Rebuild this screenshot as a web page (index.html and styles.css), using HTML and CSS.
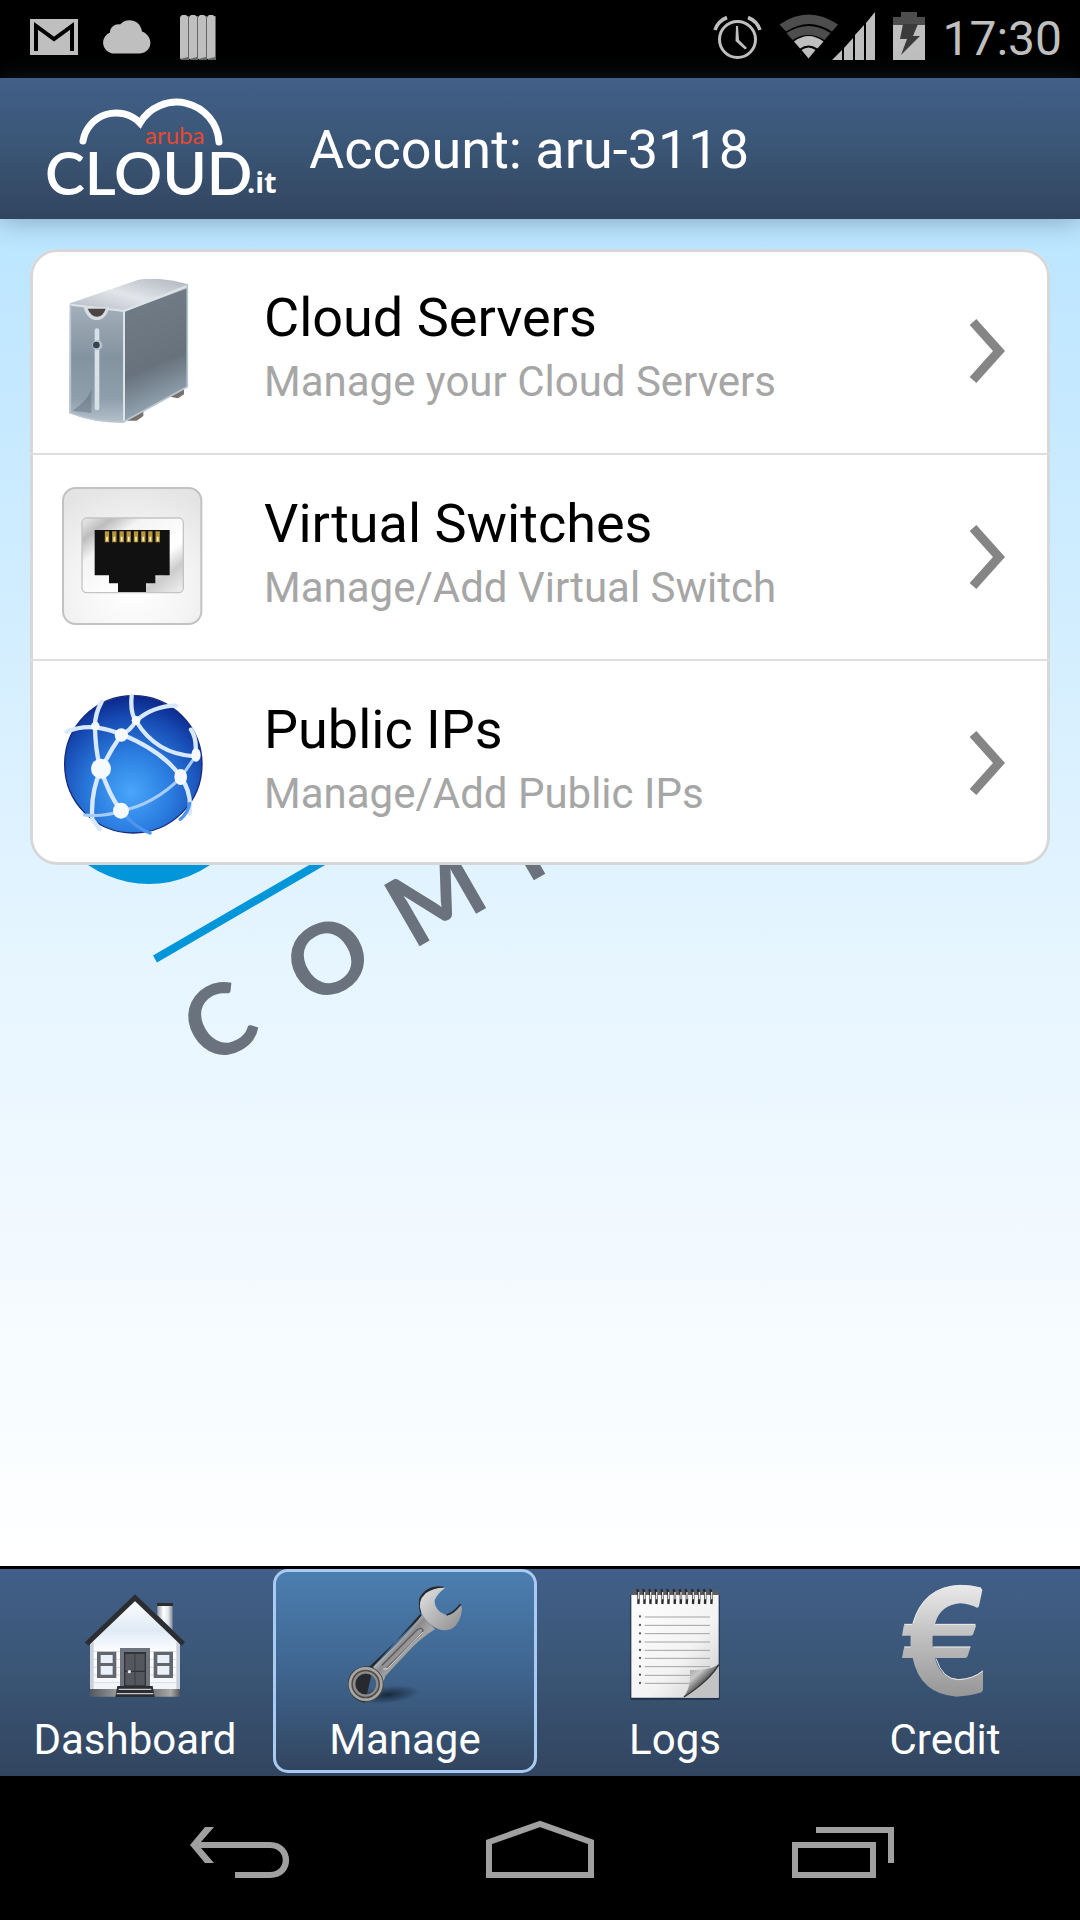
FILE: index.html
```html
<!DOCTYPE html>
<html lang="en">
<head>
  <meta charset="UTF-8">
  <meta name="viewport" content="width=device-width, initial-scale=1.0">
  <title>Aruba Cloud - Manage</title>
  <link rel="stylesheet" href="styles.css">
</head>
<body>
  <div class="status-bar">
    <div class="status-left">
      <svg width="48" height="78" viewBox="30 0 48 78" aria-hidden="true">
        <path fill="#bfbfbf" d="M30 19h48v36H30z"/>
        <path fill="none" stroke="#000" stroke-width="4" d="M36 51V26l18 13 18-13v25"/>
      </svg>
      <svg width="54" height="78" viewBox="99 0 54 78" aria-hidden="true">
        <path fill="#bfbfbf" d="M112 53.500a11 11 0 0 1-2-21c0-6 6-9 10-8 6-7 20-6 22 7 11 4 12 20-2 22z"/>
      </svg>
      <svg width="44" height="78" viewBox="174 0 44 78" aria-hidden="true">
        <path fill="#666" d="M182 16h7v44h-8zM191 16h7v44h-8zM200 16h7v44h-8zM209 16h7v44h-8z"/>
        <path fill="#bfbfbf" d="M180 17l2-2h4l2 2v40l-8 2zM189 17l2-2h4l2 2v40l-8 2zM198 17l2-2h4l2 2v40l-8 2zM207 17l2-2h4l2 2v40l-8 2z"/>
      </svg>
    </div>
    <div class="status-right">
      <svg width="50" height="78" viewBox="713 0 50 78" aria-hidden="true">
        <g fill="none" stroke="#bfbfbf" stroke-width="3">
          <circle cx="738.500" cy="39.500" r="18"/>
          <path stroke-width="3.500" d="M716 30q3-9 12-12.500M761 30q-3-9-12-12.500"/>
        </g>
        <path fill="#bfbfbf" d="M737 26h2l1 14 8 8-2 1.500-9.500-8.500z"/>
      </svg>
      <svg width="98" height="78" viewBox="779 0 98 78" aria-hidden="true">
        <path fill="#4d4d4d" d="M780.500 24.500q29-20 58.500 0l-6 7q-23-15-46 0zM787.500 33q22-14 44 0l-6 7q-16-10-32 0z"/>
        <path fill="#bfbfbf" d="M795 41.500q14.500-11 29.500 0l-6 7q-9-6-17.500 0zM802.500 50q7-5 14 0l-7 8.500z"/>
        <path fill="#bfbfbf" d="M833 60l10-10v10zM845 60V48l9-10v22zM856 60V35l9-10v35zM867 60V23l9-11v48z"/>
      </svg>
      <svg width="34" height="78" viewBox="891 0 34 78" aria-hidden="true">
        <path fill="#4d4d4d" d="M892 25v-8h8v-5h16v5h8v8z"/>
        <path fill="#bfbfbf" d="M892 25h32v35h-32z"/>
        <path fill="#3b3b3b" d="M902 24h15l-5 12h7l-19 19 6-16h-7z"/>
      </svg>
      <span class="clock">17:30</span>
    </div>
  </div>

  <header class="header">
    <svg class="logo" width="236" height="108" viewBox="45 94 236 108" role="img" aria-label="aruba CLOUD.it">
      <path fill="none" stroke="#fff" stroke-width="7" stroke-linecap="round" d="M83 141A33.500 33.500 0 0 1 140 123A42.500 42.500 0 0 1 219 142"/>
      <text class="logo-cloud" x="45" y="195">CLOUD</text>
      <text class="logo-it" x="247" y="193">.it</text>
      <text class="logo-aruba" x="145" y="144">aruba</text>
    </svg>
    <h1>Account: aru-3118</h1>
  </header>

  <main class="main">
    <svg class="watermark" width="640" height="860" viewBox="0 219 640 860" aria-hidden="true">
      <circle cx="149" cy="777" r="107" fill="#0096d9"/>
      <path stroke="#0096d9" stroke-width="8" d="M155 959L400 817"/>
      <g class="watermark-text" transform="translate(238 1051) rotate(-30)">
        <text x="-2" y="0">C</text>
        <text x="124" y="0">O</text>
        <text x="248" y="0">M</text>
        <text x="364" y="0">P</text>
      </g>
    </svg>

    <nav class="menu">
      <a class="menu-item" href="#servers">
        <svg class="menu-icon" viewBox="120 117 432 432" aria-hidden="true">
          <defs>
            <linearGradient id="srvTop" x1="0" y1="1" x2="1" y2="0"><stop offset="0" stop-color="#aeb7c0"/><stop offset=".5" stop-color="#e2e5e9"/><stop offset="1" stop-color="#adb5be"/></linearGradient>
            <linearGradient id="srvFront" x1="0" y1="0" x2="0" y2="1"><stop offset="0" stop-color="#a3afb9"/><stop offset=".45" stop-color="#8493a0"/><stop offset=".8" stop-color="#8f9eab"/><stop offset="1" stop-color="#b4c2cd"/></linearGradient>
            <linearGradient id="srvSide" x1="0" y1="0" x2=".2" y2="1"><stop offset="0" stop-color="#737e88"/><stop offset=".65" stop-color="#67727c"/><stop offset="1" stop-color="#98aab8"/></linearGradient>
          </defs>
          <path fill="#77706c" d="M325 530l45-20v18l-20 14h-28zM450 470l42-22v15l-18 12z"/>
          <path fill="url(#srvSide)" d="M308 215L502 140V440L308 548z"/>
          <path fill="url(#srvTop)" d="M150 190L355 119Q430 110 502 132V145L310 216L150 196z"/>
          <path fill="url(#srvFront)" d="M150 194L310 212V548Q220 548 148 520z"/>
          <path fill="#626f7b" opacity=".5" d="M158 512q50-35 56-65v72z"/>
          <path fill="none" stroke="#dce3e9" stroke-width="6" d="M151 194L312 213L501 138M312 213V545"/>
          <path fill="none" stroke="#b9c6d0" stroke-width="5" stroke-linejoin="round" d="M151 194V518Q220 546 310 546L502 440V132"/>
          <path fill="#d8dde2" d="M190 200h78q-10 40-38 40t-40-40z"/>
          <path fill="#4b4543" d="M203 206h54q-8 24-26 24t-28-24z"/>
          <path stroke="#d9e1e8" stroke-width="14" stroke-linecap="round" d="M231 272v232"/>
          <circle cx="232" cy="316" r="15" fill="#b8c4ce"/>
          <circle cx="229" cy="315" r="10" fill="#35424f"/>
        </svg>
        <span class="menu-text">
          <span class="menu-title">Cloud Servers</span>
          <span class="menu-desc">Manage your Cloud Servers</span>
        </span>
        <svg class="chevron" width="36" height="66" viewBox="0 0 36 66" aria-hidden="true"><path fill="none" stroke="#858585" stroke-width="9" d="M4 4l26 29L4 62"/></svg>
      </a>

      <a class="menu-item" href="#switches">
        <svg class="menu-icon" viewBox="120 105 432 432" aria-hidden="true">
          <defs>
            <radialGradient id="swFace" cx=".5" cy=".75" r=".8"><stop offset="0" stop-color="#fff"/><stop offset=".5" stop-color="#f5f5f5"/><stop offset="1" stop-color="#e4e4e4"/></radialGradient>
            <linearGradient id="swPlate" x1="0" y1="0" x2="1" y2="1"><stop offset="0" stop-color="#eee"/><stop offset=".15" stop-color="#bdbdbd"/><stop offset=".3" stop-color="#f4f4f4"/><stop offset=".65" stop-color="#fff"/><stop offset=".8" stop-color="#ccc"/><stop offset="1" stop-color="#f2f2f2"/></linearGradient>
          </defs>
          <rect x="129" y="114" width="415" height="408" rx="38" fill="url(#swFace)" stroke="#c2c2c2" stroke-width="6"/>
          <rect x="186" y="204" width="304" height="224" rx="14" fill="url(#swPlate)" stroke="#c4c4c4" stroke-width="4"/>
          <path fill="#111" d="M224 240h225v136h-43v24h-28v26h-84v-26h-27v-24h-43z"/>
          <path stroke="#b5963a" stroke-width="13" d="M261 244v33M283 244v33M305 244v33M326 244v33M348 244v33M370 244v33M391 244v33M413 244v33"/>
          <path stroke="#fff3b0" stroke-width="5" d="M261 260v14M283 260v14M305 260v14M326 260v14M348 260v14M370 260v14M391 260v14M413 260v14"/>
        </svg>
        <span class="menu-text">
          <span class="menu-title">Virtual Switches</span>
          <span class="menu-desc">Manage/Add Virtual Switch</span>
        </span>
        <svg class="chevron" width="36" height="66" viewBox="0 0 36 66" aria-hidden="true"><path fill="none" stroke="#858585" stroke-width="9" d="M4 4l26 29L4 62"/></svg>
      </a>

      <a class="menu-item" href="#ips">
        <svg class="menu-icon" viewBox="120 723 432 432" aria-hidden="true">
          <defs>
            <radialGradient id="globe" cx=".48" cy=".7" r=".72"><stop offset="0" stop-color="#48a7fa"/><stop offset=".4" stop-color="#2b7de0"/><stop offset=".75" stop-color="#174cb4"/><stop offset="1" stop-color="#0a2185"/></radialGradient>
          </defs>
          <circle cx="340" cy="943" r="206" fill="url(#globe)" stroke="#152a7c" stroke-width="4"/>
          <g fill="none" stroke="#d9e9fd" stroke-width="13" stroke-linecap="round">
            <path d="M335 738q-5 50 13 75M245 755q-22 40-20 80q2 70 16 120M140 845q45-18 90-12t75 22M305 853q25-10 43-40q50-45 120-46M305 853q-35 50-62 105"/>
            <path d="M243 958q-32 70-26 150l22 30M243 958q25 80 60 123M305 853q130 55 177 128q34 45 27 110M348 813q60 100 177 106q8-50-12-80"/>
            <path stroke="#a8ccf8" stroke-width="9" d="M303 1083q100-20 179-100l45-65M303 1083q-50 18-110 12"/>
            <path stroke="#4d94f0" stroke-width="10" d="M310 1090q40 45 80 59M509 1060q-4 28-28 48"/>
          </g>
          <g fill="#f5faff">
            <circle cx="243" cy="956" r="30"/>
            <circle cx="303" cy="1082" r="24"/>
            <ellipse cx="482" cy="981" rx="19" ry="24"/>
            <circle cx="304" cy="855" r="20"/>
            <circle cx="226" cy="828" r="13"/>
            <circle cx="348" cy="811" r="13"/>
            <ellipse cx="528" cy="915" rx="14" ry="20"/>
          </g>
        </svg>
        <span class="menu-text">
          <span class="menu-title">Public IPs</span>
          <span class="menu-desc">Manage/Add Public IPs</span>
        </span>
        <svg class="chevron" width="36" height="66" viewBox="0 0 36 66" aria-hidden="true"><path fill="none" stroke="#858585" stroke-width="9" d="M4 4l26 29L4 62"/></svg>
      </a>
    </nav>
  </main>

  <nav class="tab-bar">
    <a class="tab" href="#dashboard">
      <svg class="tab-icon" viewBox="225 102 360 360" aria-hidden="true">
        <defs>
          <linearGradient id="wall" x1="0" y1="0" x2="0" y2="1"><stop offset="0" stop-color="#fff"/><stop offset=".35" stop-color="#dfeaf6"/><stop offset=".6" stop-color="#fff"/><stop offset="1" stop-color="#f2f5f8"/></linearGradient>
          <linearGradient id="base"><stop offset="0" stop-color="#55595f"/><stop offset=".3" stop-color="#999"/><stop offset=".7" stop-color="#777"/><stop offset=".9" stop-color="#aaa"/><stop offset="1" stop-color="#555"/></linearGradient>
          <linearGradient id="chimney"><stop offset="0" stop-color="#9ba3ad"/><stop offset=".4" stop-color="#fff"/><stop offset=".7" stop-color="#e4e8ee"/><stop offset="1" stop-color="#7e8792"/></linearGradient>
        </defs>
        <path fill="url(#chimney)" d="M472 165h46v75l-46-45z"/>
        <path fill="#2c2c2f" d="M471 159h48v9h-48z"/>
        <path fill="url(#wall)" d="M270 417V275L405 145L540 275V417z"/>
        <path fill="#c9d0d9" d="M270 275h11v142h-11zM529 275h11v142h-11z"/>
        <path stroke="#d9dde2" stroke-width="3" d="M282 305h246M282 328h246M282 352h246M282 375h246M282 398h246"/>
        <path fill="none" stroke="#2c2d30" stroke-width="15" d="M260 282L405 143L550 282"/>
        <path fill="url(#base)" d="M270 417h270v23H270z"/>
        <path fill="#6e747d" d="M360 294h90v122h-90z"/>
        <path fill="#303238" d="M372 306h66v102h-66z"/>
        <path fill="#54575d" d="M376 312h28v50h-28zM406 312h28v50h-28zM376 366h28v40h-28zM406 366h28v40h-28z"/>
        <circle cx="388" cy="365" r="5" fill="#e8e8e8"/>
        <path fill="#2b2d31" d="M352 408h106l6 33H346z"/>
        <path stroke="#c5c8cd" stroke-width="4" d="M356 418h98M350 431h110"/>
        <path fill="#62676f" d="M291 305h58v79h-58zM461 305h58v79h-58z"/>
        <path fill="#eaf0f7" d="M302 315h36v24h-36zM302 348h36v26h-36zM472 315h36v24h-36zM472 348h36v26h-36z"/>
      </svg>
      <span>Dashboard</span>
    </a>

    <a class="tab tab-active" href="#manage">
      <svg class="tab-icon" viewBox="255 102 360 360" aria-hidden="true">
        <defs>
          <linearGradient id="jaw" x1="0" y1="0" x2="1" y2="1"><stop offset="0" stop-color="#e4e4e4"/><stop offset=".5" stop-color="#b8b8b8"/><stop offset="1" stop-color="#8d8d8d"/></linearGradient>
          <linearGradient id="shaft" gradientUnits="userSpaceOnUse" x1="400" y1="265" x2="445" y2="305"><stop offset="0" stop-color="#d2d2d2"/><stop offset=".5" stop-color="#8c8c8e"/><stop offset="1" stop-color="#a5a5a5"/></linearGradient>
          <radialGradient id="shade"><stop offset="0" stop-color="#142436" stop-opacity=".9"/><stop offset="1" stop-color="#142436" stop-opacity="0"/></radialGradient>
        </defs>
        <ellipse cx="385" cy="434" rx="95" ry="26" fill="url(#shade)" transform="rotate(-6 385 434)"/>
        <path fill="#26292e" d="M553 110Q500 102 478 145Q473 175 485 200L330 348Q270 350 264 395Q268 450 315 458L340 350z"/>
        <path fill="url(#shaft)" d="M340 350Q440 255 486 195L525 238Q480 265 440 310L376 378Q372 395 360 405z"/>
        <path fill="none" stroke="#5d5d60" stroke-width="4" d="M366 346L470 241Q484 230 489 240Q489 247 478 257L380 354"/>
        <path fill="none" stroke="#dcdcdc" stroke-width="3" d="M370 357h11L489 246"/>
        <path fill="url(#jaw)" d="M556 113Q520 112 497 130Q470 155 484 188Q492 207 518 228Q545 248 575 236Q602 220 606 176L602 164Q585 194 560 196L540 186Q522 170 524 150Q533 130 556 113z"/>
        <path fill="none" stroke="#26292e" stroke-width="5" d="M560 195Q580 190 602 163"/>
        <circle cx="318" cy="402" r="42" fill="none" stroke="#4c4a49" stroke-width="22"/>
        <circle cx="317" cy="402" r="47" fill="none" stroke="#aaa7a3" stroke-width="8"/>
        <circle cx="317" cy="402" r="35" fill="none" stroke="#8f8d8a" stroke-width="7"/>
      </svg>
      <span>Manage</span>
    </a>

    <a class="tab" href="#logs">
      <svg class="tab-icon" viewBox="225 102 360 360" aria-hidden="true">
        <defs>
          <linearGradient id="paper" x1="0" y1="0" x2="1" y2="1"><stop offset="0" stop-color="#fff"/><stop offset=".6" stop-color="#f3f3f3"/><stop offset="1" stop-color="#c9c9c9"/></linearGradient>
          <linearGradient id="curl" x1="0" y1="0" x2=".6" y2=".6"><stop offset="0" stop-color="#858585"/><stop offset=".6" stop-color="#c8c8c8"/><stop offset="1" stop-color="#444"/></linearGradient>
        </defs>
        <path fill="#20304a" d="M271 135h268v314H271z"/>
        <path fill="#5c5d60" d="M278 122h254l6 14H272z"/>
        <path fill="url(#paper)" d="M274 135h262v308H274z"/>
        <path stroke="#a3a3a3" stroke-width="3" d="M314 201h196M314 226h196M314 251h196M314 276h196M314 301h196M314 325h196M314 350h196M314 376h136M314 400h136"/>
        <path stroke="#56575c" stroke-width="7" stroke-linecap="round" d="M300 199v0M300 225v0M300 250v0M300 275v0M300 300v0M300 324v0M300 349v0M300 374v0M300 399v0"/>
        <path fill="#c3c3c3" d="M536 350V443H430z"/>
        <path fill="url(#curl)" d="M450 360Q515 360 536 342Q515 385 425 443Q452 428 450 360z"/>
        <path fill="none" stroke="#333" stroke-width="4" d="M536 344Q510 390 432 441"/>
        <path fill="none" stroke="#2c2c2e" stroke-width="7" d="M292 117q6 20 3 45M310 117q6 20 3 45M328 117q6 20 3 45M346 117q6 20 3 45M364 117q6 20 3 45M382 117q6 20 3 45M401 117q6 20 3 45M419 117q6 20 3 45M437 117q6 20 3 45M456 117q6 20 3 45M474 117q6 20 3 45M492 117q6 20 3 45M511 117q6 20 3 45"/>
        <path fill="none" stroke="#ddd" stroke-width="4" d="M296 126v22M314 126v22M332 126v22M350 126v22M368 126v22M386 126v22M405 126v22M423 126v22M441 126v22M460 126v22M478 126v22M496 126v22M515 126v22"/>
      </svg>
      <span>Logs</span>
    </a>

    <a class="tab" href="#credit">
      <svg class="tab-icon" viewBox="255 102 360 360" aria-hidden="true">
        <defs>
          <linearGradient id="euro" x1="0" y1="0" x2="0" y2="1"><stop offset="0" stop-color="#e9e9e9"/><stop offset=".5" stop-color="#bdbdbd"/><stop offset="1" stop-color="#969696"/></linearGradient>
        </defs>
        <path fill="url(#euro)" d="M547 121Q547 115 540 113Q510 105 480 105Q370 110 337 222H322Q314 222 311 229L306 257H332Q331 275 332 290H320Q313 290 311 297L306 324H338Q360 432 470 440Q510 438 544 427Q549 424 549 418V361Q520 387 475 387Q420 385 405 324H495Q501 324 503 318L512 290H398Q397 275 398 257H512Q518 257 520 251L528 228Q528 222 521 222H405Q420 165 480 160Q510 162 531 173Q535 174 537 168z"/>
        <path fill="none" stroke="#ececec" stroke-width="3" d="M339 220Q370 110 480 106Q515 106 543 114M406 223H526M400 291H511M312 223h25M312 291h20M408 326q20 62 67 63 45-2 73-26"/>
      </svg>
      <span>Credit</span>
    </a>
  </nav>

  <div class="nav-bar">
    <button class="nav-button" type="button" aria-label="Back">
      <svg width="120" height="144" viewBox="180 1776 120 144"><path fill="#a0a0a0" d="M190 1845l15-18h9l-13 15h69c25 0 26 36 0 36h-35v-6h35c17 0 17-24 0-24h-69l13 15h-9z"/></svg>
    </button>
    <button class="nav-button" type="button" aria-label="Home">
      <svg width="120" height="144" viewBox="480 1776 120 144"><path fill="none" stroke="#a0a0a0" stroke-width="6" d="M489 1875v-33l51-18 51 18v33z"/></svg>
    </button>
    <button class="nav-button" type="button" aria-label="Recent apps">
      <svg width="120" height="144" viewBox="780 1776 120 144"><path fill="none" stroke="#a0a0a0" stroke-width="6" d="M795 1845h78v30h-78zM816 1830h75v33"/></svg>
    </button>
  </div>
</body>
</html>
```
FILE: styles.css
```css
* {
    box-sizing: border-box;
}

body {
    margin: 0;
    min-height: 100vh;
    display: flex;
    flex-direction: column;
    background: #000;
    font-family: Roboto, "Noto Sans", sans-serif;
}

a {
    color: inherit;
    text-decoration: none;
}

svg {
    display: block;
    flex-shrink: 0;
}

/* android status bar */
.status-bar {
    height: 78px;
    padding: 0 18px 0 30px;
    display: flex;
    justify-content: space-between;
    background: #000;
}

.status-left {
    display: flex;
    gap: 21px;
}

.status-right {
    display: flex;
    align-items: center;
    gap: 16px;
}

.clock {
    font-size: 48px;
    line-height: 78px;
    color: #bfbfbf;
}

/* header */
.header {
    position: relative;
    z-index: 1;
    padding: 16px 45px 17px;
    display: flex;
    align-items: center;
    gap: 28px;
    background: linear-gradient(#415f88, #3a5575 50%, #32455f);
    box-shadow: 0 3px 24px rgba(60, 80, 100, 0.4);
}

.header h1 {
    margin: 0;
    padding-top: 3px;
    font-size: 54px;
    line-height: 64px;
    font-weight: 400;
    color: #fff;
}

.logo {
    overflow: visible;
}

.logo-cloud {
    font: 600 60px Lato, sans-serif;
    fill: #fff;
}

.logo-it {
    font: 700 29px "Open Sans", sans-serif;
    fill: #fff;
}

.logo-aruba {
    font: 400 24px Lato, sans-serif;
    fill: #e8492f;
}

/* content */
.main {
    position: relative;
    flex: 1;
    padding: 30px;
    background: linear-gradient(#bbe5ff, #e6f5ff 55%, #fff);
}

.watermark {
    position: absolute;
    top: 0;
    left: 0;
}

.watermark-text {
    font: 700 98px Lato, sans-serif;
    fill: #6a737d;
    text-anchor: middle;
}

.menu {
    position: relative;
    background: #fff;
    border-radius: 27px;
    box-shadow: inset 0 0 0 3px #d5d7d9;
}

.menu-item {
    padding: 30px;
    display: flex;
    align-items: center;
    border-bottom: 2px solid #dedede;
}

.menu-item:last-child {
    border-bottom: none;
}

.menu-icon {
    width: 144px;
    height: 144px;
}

.menu-text {
    flex: 1;
    margin-left: 60px;
    padding-bottom: 9px;
    display: flex;
    flex-direction: column;
}

.menu-title {
    font-size: 54px;
    line-height: 70px;
    color: #000;
}

.menu-desc {
    font-size: 42px;
    line-height: 58px;
    color: #a6a6a6;
}

.chevron {
    margin-right: 15px;
}

/* bottom tabs */
.tab-bar {
    display: flex;
    border-top: 3px solid #000;
    background: linear-gradient(#415f88, #3a5575 50%, #32455f);
}

.tab {
    flex: 1;
    margin: 0 3px 3px;
    padding: 12px 0 6px;
    display: flex;
    flex-direction: column;
    align-items: center;
    gap: 12px;
    border: 3px solid transparent;
    border-radius: 15px;
    font-size: 42px;
    line-height: 48px;
    color: #fff;
}

.tab-active {
    border-color: #a9caf2;
    background: linear-gradient(#4b7eb0, #3f658f 50%, #32455f);
    background-clip: padding-box;
}

.tab-icon {
    width: 120px;
    height: 120px;
}

/* android navigation bar */
.nav-bar {
    height: 144px;
    padding: 0 90px;
    display: flex;
    background: #000;
}

.nav-button {
    flex: 1;
    padding: 0;
    display: flex;
    justify-content: center;
    border: none;
    background: none;
}
```
